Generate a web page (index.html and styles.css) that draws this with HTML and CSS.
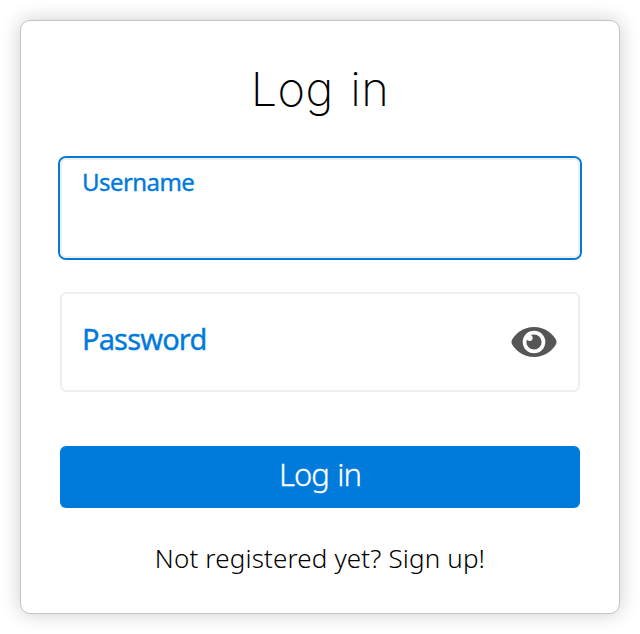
FILE: index.html
```html
<!DOCTYPE html>
<html lang="en">
<head>
<meta charset="utf-8">
<title>Log in</title>
<link rel="stylesheet" href="styles.css">
</head>
<body>
<main class="card">
  <h1 class="title">Log in</h1>
  <div class="field field-active"><span class="label label-small">Username</span></div>
  <div class="field field-password">
    <span class="label">Password</span>
    <svg class="eye" viewBox="0 0 46 30" aria-hidden="true">
      <path fill="#555" d="M23 0C12 0 4 7 .9 13Q0 15 .9 17C4 23 12 30 23 30S42 23 45.1 17Q46 15 45.1 13C42 7 34 0 23 0Z"/>
      <circle cx="23" cy="15" r="11.300" fill="#fff"/>
      <circle cx="23" cy="15" r="7.600" fill="#555"/>
      <circle cx="18.700" cy="10.900" r="3" fill="#fff"/>
    </svg>
  </div>
  <button class="submit">Log in</button>
  <p class="signup">Not registered yet? Sign up!</p>
</main>
</body>
</html>
```
FILE: styles.css
```css
* { box-sizing: border-box; }
body { margin: 0; padding: 20px; background: #fff; font-family: "Noto Sans", sans-serif; }
.card {
  width: 600px;
  height: 594px;
  padding: 39px;
  border: 1px solid #c4c4c4;
  border-radius: 10px;
  background: #fff;
  box-shadow: 0 0 20px rgba(0, 0, 0, .2);
}
.title {
  height: 60px;
  margin: 0 0 38px;
  font: 200 47px/58px Inter, sans-serif;
  letter-spacing: .4px;
  word-spacing: 3px;
  text-align: center;
}
.field {
  display: flex;
  height: 100px;
  padding: 0 20px;
  border: 2px solid #eee;
  border-radius: 6px;
}
.field-active { box-shadow: 0 0 0 2px #007adb; }
.field-password { margin-top: 34px; padding-right: 21px; align-items: center; justify-content: space-between; }
.label {
  margin-top: -7px;
  color: #007adb;
  font: 400 29px/36px "Noto Sans", sans-serif;
  letter-spacing: -.85px;
  -webkit-text-stroke: .35px #007adb;
}
.label-small { font-size: 24px; line-height: 30px; letter-spacing: -.55px; margin-top: 7px; }
.eye { width: 46px; height: 30px; }
.submit {
  display: block;
  width: 520px;
  height: 62px;
  margin-top: 54px;
  padding: 0 0 5px;
  border: 0;
  border-radius: 6px;
  background: #007adb;
  color: #fff;
  font: 300 31px/57px "Noto Sans", sans-serif;
  letter-spacing: -1px;
  word-spacing: 1.5px;
  -webkit-text-stroke: .3px #fff;
}
.signup {
  margin: 33px 0 0;
  font-size: 26px;
  font-weight: 300;
  line-height: 34px;
  letter-spacing: .15px;
  text-align: center;
}
```
